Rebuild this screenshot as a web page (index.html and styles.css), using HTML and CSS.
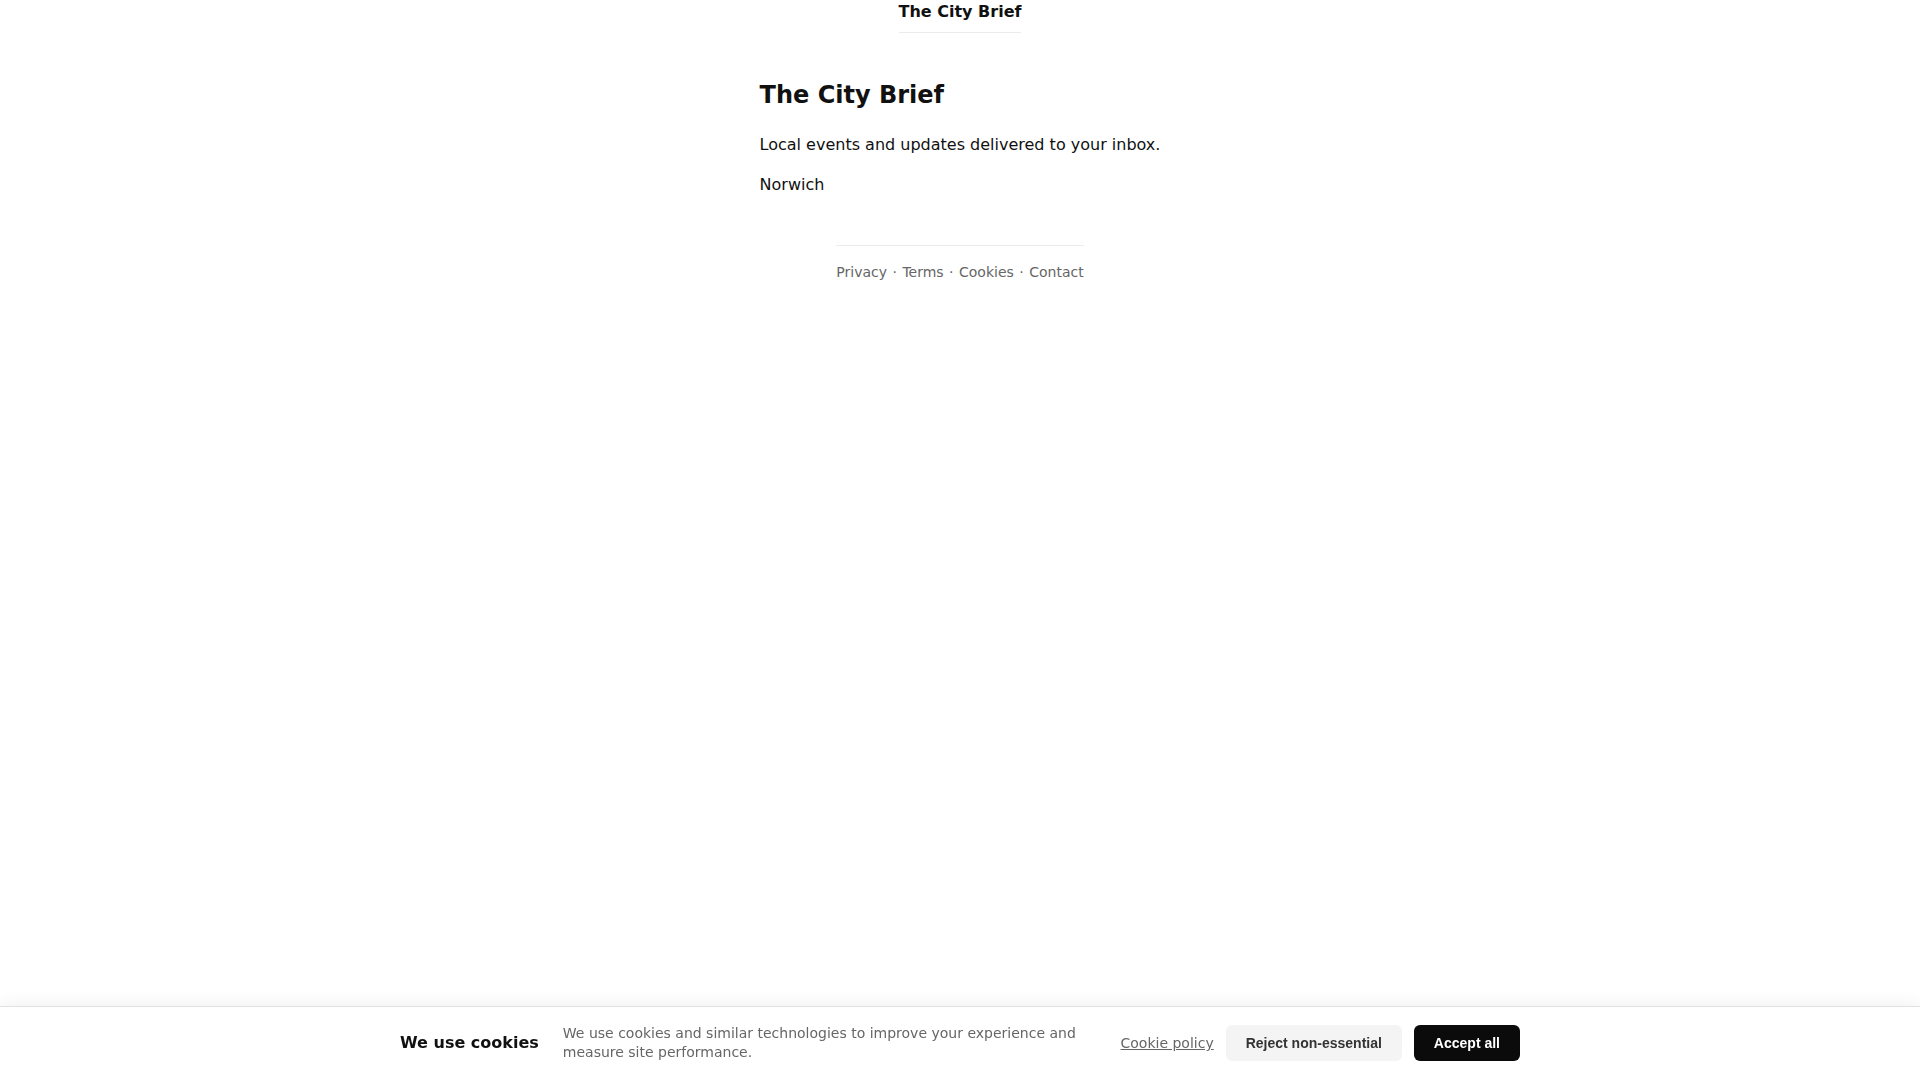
FILE: index.html
```html
<!DOCTYPE html>
<html lang="en">
<head>
<meta charset="utf-8">
<title>The City Brief</title>
<link rel="stylesheet" href="styles.css">
</head>
<body>
<header class="site-header">
  <span class="brand">The City Brief</span>
</header>
<main class="content">
  <h1 class="title">The City Brief</h1>
  <p class="text">Local events and updates delivered to your inbox.</p>
  <p class="text">Norwich</p>
</main>
<footer class="site-footer">
  <nav class="footer-links">
    <a href="#" class="footer-link">Privacy</a> · <a href="#" class="footer-link">Terms</a> · <a href="#" class="footer-link">Cookies</a> · <a href="#" class="footer-link">Contact</a>
  </nav>
</footer>
<div class="cookie-banner" role="dialog" aria-label="Cookie consent">
  <div class="cookie-inner">
    <h2 class="cookie-title">We use cookies</h2>
    <p class="cookie-desc">We use cookies and similar technologies to improve your experience and measure site performance.</p>
    <div class="cookie-actions">
      <a href="#" class="cookie-link">Cookie policy</a>
      <button class="btn btn-secondary" type="button">Reject non-essential</button>
      <button class="btn btn-primary" type="button">Accept all</button>
    </div>
  </div>
</div>
</body>
</html>
```
FILE: styles.css
```css
html, body {
  margin: 0;
  padding: 0;
  background: #fff;
}
body {
  font-family: "DejaVu Sans", sans-serif;
  color: #111;
}
.site-header {
  text-align: center;
}
.brand {
  display: inline-block;
  font-size: 16px;
  font-weight: bold;
  line-height: 1.5;
  padding-bottom: 8px;
  border-bottom: 1px solid #ececec;
  color: #111;
}
.content {
  width: fit-content;
  margin: 48px auto 0;
}
.title {
  font-size: 24px;
  line-height: 1.2;
  font-weight: bold;
  margin: 0 0 23px;
  color: #111;
}
.text {
  font-size: 16px;
  line-height: 1.5;
  margin: 16px 0;
  color: #111;
}
.site-footer {
  text-align: center;
  margin-top: 48px;
}
.footer-links {
  display: inline-block;
  border-top: 1px solid #ececec;
  padding-top: 16px;
  font-size: 14px;
  line-height: 1.5;
  color: #666;
  word-spacing: 1px;
}
.footer-link {
  color: #666;
  text-decoration: none;
}
.cookie-banner {
  position: fixed;
  left: 0;
  right: 0;
  bottom: 0;
  background: #fff;
  border-top: 1px solid #e2e2e2;
  box-shadow: 0 -4px 14px rgba(0, 0, 0, 0.05);
  padding: 17px 0;
}
.cookie-inner {
  max-width: 1120px;
  margin: 0 auto;
  display: flex;
  align-items: center;
  gap: 24px;
}
.cookie-title {
  margin: 0;
  font-size: 16px;
  font-weight: bold;
  white-space: nowrap;
  color: #111;
  line-height: 1.4;
}
.cookie-desc {
  flex: 1;
  margin: 0;
  font-size: 14px;
  line-height: 1.4;
  color: #666;
}
.cookie-actions {
  display: flex;
  align-items: center;
  gap: 12px;
}
.cookie-link {
  font-size: 14px;
  color: #666;
  text-decoration: underline;
  white-space: nowrap;
}
.btn {
  font-family: "Liberation Sans", Arial, sans-serif;
  font-size: 14px;
  font-weight: bold;
  line-height: 16px;
  padding: 10px 20px;
  border-radius: 6px;
  border: none;
  white-space: nowrap;
  cursor: pointer;
}
.btn-secondary {
  background: #f4f4f4;
  color: #333;
}
.btn-primary {
  background: #0b0b0b;
  color: #fff;
}
```
